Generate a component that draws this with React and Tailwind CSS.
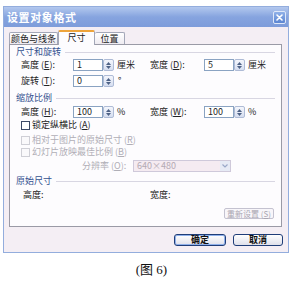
import React from "react";

function Spin() {
  return (
    <div className="w-[11px] h-[12px] border border-[#aebbd6] rounded-[2px] bg-gradient-to-b from-[#f4f6fc] to-[#d6def0] flex flex-col items-center justify-center gap-[1px]">
      <svg width="5" height="3" viewBox="0 0 5 3"><path d="M0 3 L2.5 0 L5 3 Z" fill="#4d6185" /></svg>
      <svg width="5" height="3" viewBox="0 0 5 3"><path d="M0 0 L2.5 3 L5 0 Z" fill="#4d6185" /></svg>
    </div>
  );
}

function Field({ value }) {
  return (
    <div className="flex items-center">
      <div className="w-[30px] h-[12px] border border-[#8aa3c2] bg-white text-[9px] leading-[10px] pl-[3px] text-[#222]">
        {value}
      </div>
      <Spin />
    </div>
  );
}

function Section({ title, mt }) {
  return (
    <div className={`flex items-center h-[12px] pl-[6px] pr-[6px] ${mt}`}>
      <span className="text-[9px] leading-[12px] text-[#34518f]">{title}</span>
      <div className="flex-1 ml-[4px] h-px bg-[#d8d6e2]" />
    </div>
  );
}

function Label({ cjk, letter, w }) {
  return (
    <span className={`text-[9px] leading-[12px] text-[#222] whitespace-nowrap ${w}`}>
      {cjk} (<span className="underline">{letter}</span>):
    </span>
  );
}

function Checkbox({ disabled, label, letter }) {
  return (
    <div className="flex items-center h-[12px] pl-[11px]">
      <div
        className={`w-[9px] h-[9px] border ${
          disabled ? "border-[#cfcfd6] bg-[#faf9fb]" : "border-[#3c4a66] bg-white"
        }`}
      />
      <span
        className={`ml-[2px] text-[9px] leading-[12px] whitespace-nowrap ${
          disabled ? "text-[#b0aeb6]" : "text-[#222]"
        }`}
      >
        {label} (<span className="underline">{letter}</span>)
      </span>
    </div>
  );
}

export default function App() {
  return (
    <div className="w-[303px] h-[281px] bg-white font-['Noto_Sans_CJK_SC','Liberation_Sans',sans-serif] overflow-hidden">
      <div className="pl-[3px] pt-[6px]">
        <div className="w-[286px] h-[247px] border border-[#93addd] bg-[#f4eef4] flex flex-col">
          {/* title bar */}
          <div className="h-[20px] bg-gradient-to-b from-[#b3c8ee] via-[#86a4df] to-[#7d9cda] flex items-center justify-between pl-[3px] pr-[2px]">
            <span className="text-[11px] font-bold tracking-[0.6px] text-white leading-[14px]">设置对象格式</span>
            <div className="w-[13px] h-[13px] rounded-[2px] border border-[#dfe8f8] bg-gradient-to-b from-[#8fb0e8] to-[#5c86d2] flex items-center justify-center">
              <svg width="7" height="7" viewBox="0 0 7 7">
                <path d="M1 1 L6 6 M6 1 L1 6" stroke="white" strokeWidth="1.6" strokeLinecap="round" />
              </svg>
            </div>
          </div>

          <div className="px-[5px]">
            {/* tabs */}
            <div className="h-[17px] flex items-end">
              <div className="w-[49px] h-[12px] border border-b-0 border-[#a3a7b8] rounded-t-[2px] bg-gradient-to-b from-white to-[#eeebf1] text-[9px] leading-[11px] text-center text-[#222]">
                颜色与线条
              </div>
              <div className="w-[37px] h-[15px] border-x border-[#a3a7b8] border-t-[2px] border-t-[#eea43a] rounded-t-[2px] bg-[#fdfcfe] text-[9px] leading-[12px] text-center text-[#222] relative z-10 -mb-px">
                尺寸
              </div>
              <div className="w-[30px] h-[12px] border border-b-0 border-l-0 border-[#a3a7b8] rounded-t-[2px] bg-gradient-to-b from-white to-[#eeebf1] text-[9px] leading-[11px] text-center text-[#222]">
                位置
              </div>
            </div>

            {/* panel */}
            <div className="w-[273px] h-[183px] border border-[#9a9aa6] bg-[#fdfcfe] flex flex-col">
              <Section title="尺寸和旋转" mt="mt-[1px]" />
              <div className="mt-[1px] h-[12px] flex items-center pl-[11px]">
                <div className="w-[129px] flex items-center">
                  <Label cjk="高度" letter="E" w="w-[52px]" />
                  <Field value="1" />
                  <span className="ml-[3px] text-[9px] text-[#222]">厘米</span>
                </div>
                <Label cjk="宽度" letter="D" w="w-[54px]" />
                <Field value="5" />
                <span className="ml-[3px] text-[9px] text-[#222]">厘米</span>
              </div>
              <div className="mt-[4px] h-[12px] flex items-center pl-[11px]">
                <Label cjk="旋转" letter="T" w="w-[52px]" />
                <Field value="0" />
                <span className="ml-[4px] text-[9px] text-[#222] leading-[12px]">°</span>
              </div>

              <Section title="缩放比例" mt="mt-[5px]" />
              <div className="mt-[2px] h-[12px] flex items-center pl-[11px]">
                <div className="w-[129px] flex items-center">
                  <Label cjk="高度" letter="H" w="w-[52px]" />
                  <Field value="100" />
                  <span className="ml-[3px] text-[9px] text-[#222]">%</span>
                </div>
                <Label cjk="宽度" letter="W" w="w-[54px]" />
                <Field value="100" />
                <span className="ml-[3px] text-[9px] text-[#222]">%</span>
              </div>
              <div className="mt-[1px]">
                <Checkbox label="锁定纵横比" letter="A" />
              </div>
              <div className="mt-[3px]">
                <Checkbox disabled label="相对于图片的原始尺寸" letter="R" />
              </div>
              <div className="mt-0">
                <Checkbox disabled label="幻灯片放映最佳比例" letter="B" />
              </div>
              <div className="mt-[2px] h-[12px] flex items-center pl-[72px]">
                <span className="w-[51px] text-[9px] leading-[12px] text-[#b0aeb6] whitespace-nowrap">
                  分辨率 (<span className="underline">O</span>):
                </span>
                <div className="w-[98px] h-[12px] border border-[#cfc9da] bg-[#f5ebf1] flex items-center justify-between">
                  <span className="pl-[3px] text-[9px] leading-[10px] text-[#b4aab4]">640×480</span>
                  <div className="w-[10px] h-[10px] bg-[#e6eaf5] flex items-center justify-center">
                    <svg width="6" height="4" viewBox="0 0 6 4">
                      <path d="M0.5 0.5 L3 3 L5.5 0.5" stroke="#9aa8c8" strokeWidth="1.2" fill="none" />
                    </svg>
                  </div>
                </div>
              </div>

              <Section title="原始尺寸" mt="mt-[3px]" />
              <div className="mt-[2px] h-[12px] flex items-center pl-[13px]">
                <span className="w-[127px] text-[9px] leading-[12px] text-[#222]">高度:</span>
                <span className="text-[9px] leading-[12px] text-[#222]">宽度:</span>
              </div>
              <div className="mt-[7px] flex justify-end pr-[7px]">
                <div className="w-[50px] h-[11px] border border-[#c4c2d0] rounded-[2px] bg-[#f8f6fa] text-[8px] leading-[9px] text-center text-[#aaa6b2] whitespace-nowrap">
                  重新设置 (<span className="underline">S</span>)
                </div>
              </div>
            </div>

            {/* buttons */}
            <div className="mt-[7px] flex justify-end gap-[7px]">
              <div className="w-[52px] h-[12px] border border-[#1f3d78] rounded-[3px] bg-gradient-to-b from-white to-[#dfe0ea] shadow-[inset_0_0_0_1px_#8fb0ea] text-[9px] leading-[10px] text-center text-[#111] font-bold">
                确定
              </div>
              <div className="w-[50px] h-[12px] border border-[#1f3d78] rounded-[3px] bg-gradient-to-b from-white to-[#dfe0ea] text-[9px] leading-[10px] text-center text-[#111] font-bold">
                取消
              </div>
            </div>
          </div>
        </div>

        <div className="mt-[9px] w-[297px] text-center text-[13px] leading-[16px] text-[#111] font-['Liberation_Serif','Noto_Sans_CJK_SC',serif]">
          (图 6)
        </div>
      </div>
    </div>
  );
}
